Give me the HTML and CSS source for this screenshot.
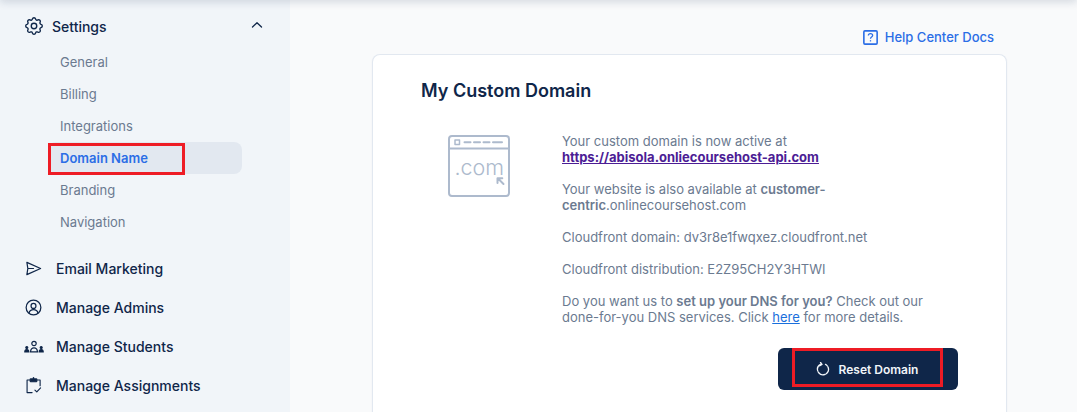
FILE: index.html
```html
<!DOCTYPE html>
<html lang="en">
<head>
<meta charset="utf-8">
<title>My Custom Domain</title>
<link rel="stylesheet" href="styles.css">
</head>
<body>
<div class="app">
  <aside class="sidebar">
    <div class="nav-head">
      <svg class="gear" viewBox="0 0 24 24" fill="none" stroke="currentColor" stroke-width="1.500" stroke-linecap="round" stroke-linejoin="round"><path d="M10.300 4.300c.4-1.800 3-1.800 3.400 0a1.700 1.700 0 0 0 2.600 1.100c1.500-.9 3.300.8 2.400 2.400a1.700 1.700 0 0 0 1 2.500c1.800.4 1.800 3 0 3.400a1.700 1.700 0 0 0-1 2.600c.9 1.500-.9 3.300-2.400 2.400a1.700 1.700 0 0 0-2.600 1c-.4 1.800-3 1.800-3.400 0a1.700 1.700 0 0 0-2.600-1c-1.500.9-3.300-.9-2.400-2.400a1.700 1.700 0 0 0-1-2.600c-1.800-.4-1.800-3 0-3.400a1.700 1.700 0 0 0 1-2.500c-.9-1.600.9-3.300 2.400-2.400a1.700 1.700 0 0 0 2.600-1.100z"/><circle cx="12" cy="12" r="3"/></svg>
      <span class="nav-head-label">Settings</span>
      <svg class="chev" viewBox="0 0 12 8" fill="none" stroke="currentColor" stroke-width="1.300" stroke-linecap="round" stroke-linejoin="round"><path d="M1.500 6 6 1.800 10.500 6"/></svg>
    </div>
    <ul class="subnav">
      <li class="sub-item">General</li>
      <li class="sub-item">Billing</li>
      <li class="sub-item">Integrations</li>
      <li class="sub-item active">Domain Name<span class="mark mark-side"></span></li>
      <li class="sub-item">Branding</li>
      <li class="sub-item">Navigation</li>
    </ul>
    <ul class="mainnav">
      <li class="main-item">
        <svg class="nav-icon" viewBox="0 0 18 18" fill="none" stroke="currentColor" stroke-width="1.300" stroke-linejoin="round" stroke-linecap="round"><path d="M2 2.500 16.500 9 2 15.500 3 9zM3 9H9"/></svg>
        Email Marketing
      </li>
      <li class="main-item">
        <svg class="nav-icon" viewBox="0 0 18 18" fill="none" stroke="currentColor" stroke-width="1.300" stroke-linecap="round"><circle cx="9" cy="9" r="7.800"/><circle cx="9" cy="7.300" r="2.600"/><path d="M4.300 14.800c.6-2.300 2.400-3.500 4.700-3.500s4.100 1.200 4.700 3.500"/></svg>
        Manage Admins
      </li>
      <li class="main-item">
        <svg class="nav-icon wide" viewBox="0 0 20 14" fill="none" stroke="currentColor" stroke-width="1.200" stroke-linecap="round"><circle cx="10" cy="3.500" r="2.200"/><path d="M6.500 11.800c.2-2.600 1.700-4 3.500-4s3.300 1.400 3.500 4z"/><circle cx="2.800" cy="7.500" r="1" fill="currentColor"/><path d="M.8 12c0-1.800.7-2.500 2-2.500s2 .8 2 2.500z" fill="currentColor"/><circle cx="17.200" cy="7.500" r="1" fill="currentColor"/><path d="M15.200 12c0-1.700.7-2.500 2-2.500s2 .7 2 2.500z" fill="currentColor"/></svg>
        Manage Students
      </li>
      <li class="main-item">
        <svg class="nav-icon" viewBox="0 0 18 18" fill="none" stroke="currentColor" stroke-width="1.200" stroke-linecap="round" stroke-linejoin="round"><path d="M5 3.200H2.200v13.300h5.300M13 3.200h3v6"/><rect x="5.500" y="2" width="7" height="3" rx=".5" fill="currentColor"/><path d="M9 .8v2" stroke-width="1.600"/><path d="m10.500 13.800 2 2 4-4.300"/></svg>
        Manage Assignments
      </li>
    </ul>
  </aside>
  <main class="content">
    <div class="help-row">
      <a class="help-link">
        <svg class="help-icon" viewBox="0 0 14 14" fill="none" stroke="currentColor" stroke-width="1.500"><rect x=".8" y=".8" width="12.400" height="12.400" rx="1"/><path d="M5 5.200c0-1.200.9-1.900 2-1.900s2 .7 2 1.800c0 1.500-2 1.500-2 3" stroke-width="1.200"/><path d="M7 9.500v1.200" stroke-width="1.200"/></svg>
        Help Center Docs
      </a>
    </div>
    <section class="card">
      <h1 class="card-title">My Custom Domain</h1>
      <div class="card-body">
        <svg class="domain-art" viewBox="0 0 62 62" fill="none" stroke="#adbacd" stroke-width="2" stroke-linecap="round" stroke-linejoin="round">
          <rect x="1" y="1" width="60" height="60" rx="3"/>
          <path d="M1 13.500h60"/>
          <rect x="7" y="5" width="4.500" height="4.500" stroke-width="1.500"/>
          <path d="M16.500 7.300h6M26 7.300h6M35.500 7.300h6M45 7.300h9"/>
          <path d="m50 43.500 5.500 5.500M49.500 48v-4.800h4.800"/>
        </svg>
        <span class="com-label">.com</span>
        <div class="copy">
          <p>Your custom domain is now active at<br><a class="url-link">https://abisola.onliecoursehost-api.com</a></p>
          <p>Your website is also available at <strong>customer-<br>centric</strong>.onlinecoursehost.com</p>
          <p>Cloudfront domain: dv3r8e1fwqxez.cloudfront.net</p>
          <p>Cloudfront distribution: E2Z95CH2Y3HTWI</p>
          <p>Do you want us to <strong>set up your DNS for you?</strong> Check out our<br>done-for-you DNS services. Click <a class="here-link">here</a> for more details.</p>
        </div>
      </div>
      <div class="actions">
        <button class="reset-btn" type="button">
          <svg class="reset-icon" viewBox="0 0 14 14" fill="none" stroke="currentColor" stroke-width="1.300" stroke-linecap="round" stroke-linejoin="round"><path d="M4.500 2.400A5.500 5.500 0 1 0 9.500 2.400" stroke-dasharray="7.500 1.200"/><path d="M4.500 .5 6 2.500 3.800 3.800"/></svg>
          Reset Domain
          <span class="mark mark-btn"></span>
        </button>
      </div>
    </section>
  </main>
</div>
</body>
</html>
```
FILE: styles.css
```css
* { box-sizing: border-box; }
html, body { margin: 0; height: 412px; overflow: hidden; }
body { font-family: Inter, "Noto Sans", sans-serif; background: #f9fafb; color: #0f2649; position: relative; }
body::before { content: ""; position: absolute; z-index: 5; left: 0; right: 0; top: -10px; height: 10px; box-shadow: 0 2px 8px rgba(15, 38, 73, .16); }
.app { display: flex; height: 412px; }
.sidebar { width: 290px; flex: none; background: #f1f5f9; padding: 16px 48px 0 25px; }
.nav-head { display: flex; align-items: center; height: 20px; margin-right: -22px; font-size: 14px; font-weight: 500; }
.gear { width: 22px; height: 22px; margin: 0 -2px 0 -2px; flex: none; }
.nav-head-label { margin-left: 9px; flex: 1; }
.chev { width: 12px; height: 8px; margin-right: 1px; margin-top: -3px; }
.subnav { list-style: none; margin: 10px 0 0 23px; padding: 0; }
.sub-item { position: relative; height: 32px; width: 194px; padding-left: 12px; display: flex; align-items: center; font-size: 13px; font-weight: 400; color: #6b7a90; border-radius: 8px; }
.sub-item.active { background: #e2e8f0; color: #2b6ee6; font-weight: 600; }
.mark { position: absolute; border: 3px solid #ee1c25; pointer-events: none; }
.mark-side { left: 0; top: 1px; width: 137px; height: 32px; }
.mainnav { list-style: none; margin: 11px 0 0; padding: 0; }
.main-item { display: flex; align-items: center; height: 39px; font-size: 14px; font-weight: 500; gap: 14px; color: #0f2649; }
.nav-icon { width: 17px; height: 17px; flex: none; }
.nav-icon.wide { width: 20px; height: 14px; margin-left: -1.500px; margin-right: -1.500px; }
.content { flex: 1; padding: 29px 70px 0 82px; min-width: 0; }
.help-row { display: flex; justify-content: flex-end; height: 25px; padding-right: 13px; }
.help-link { display: inline-flex; align-items: center; height: 16px; gap: 7px; font-size: 13px; font-weight: 500; color: #2b6ee6; }
.help-icon { width: 15px; height: 15px; }
.card { background: #fff; border: 1px solid #e2e8f0; border-bottom: 0; border-radius: 8px 8px 0 0; height: 358px; padding: 25px 48px 0; position: relative; box-shadow: 0 1px 2px rgba(15, 38, 73, .05); }
.card-title { margin: 0; font-size: 18px; line-height: 22px; font-weight: 600; color: #0f2649; }
.card-body { display: flex; margin-top: 32px; position: relative; padding-left: 27px; }
.domain-art { width: 62px; height: 62px; flex: none; margin-top: 1px; }
.com-label { position: absolute; left: 33.500px; top: 21px; font-size: 21.500px; line-height: 24px; color: #adbacd; font-weight: 300; }
.copy { margin: -1px 0 0 52px; font-size: 13px; line-height: 16px; color: #6b7a90; }
.copy p { margin: 0 0 16px; }
.copy strong { font-weight: 600; }
.url-link { color: #4c1d95; font-weight: 700; text-decoration: underline; }
.here-link { color: #1a6fdc; text-decoration: underline; }
.actions { display: flex; justify-content: flex-end; margin-top: 7px; }
.reset-btn { position: relative; width: 180px; height: 42px; border: 0; border-radius: 6px; background: #0f2649; color: #f1f5f9; font: 600 12px Inter, sans-serif; display: flex; align-items: center; justify-content: center; gap: 9px; }
.reset-icon { width: 14px; height: 14px; margin-left: -2px; }
.mark-btn { left: 14px; top: 0; width: 151px; height: 39px; }
```
